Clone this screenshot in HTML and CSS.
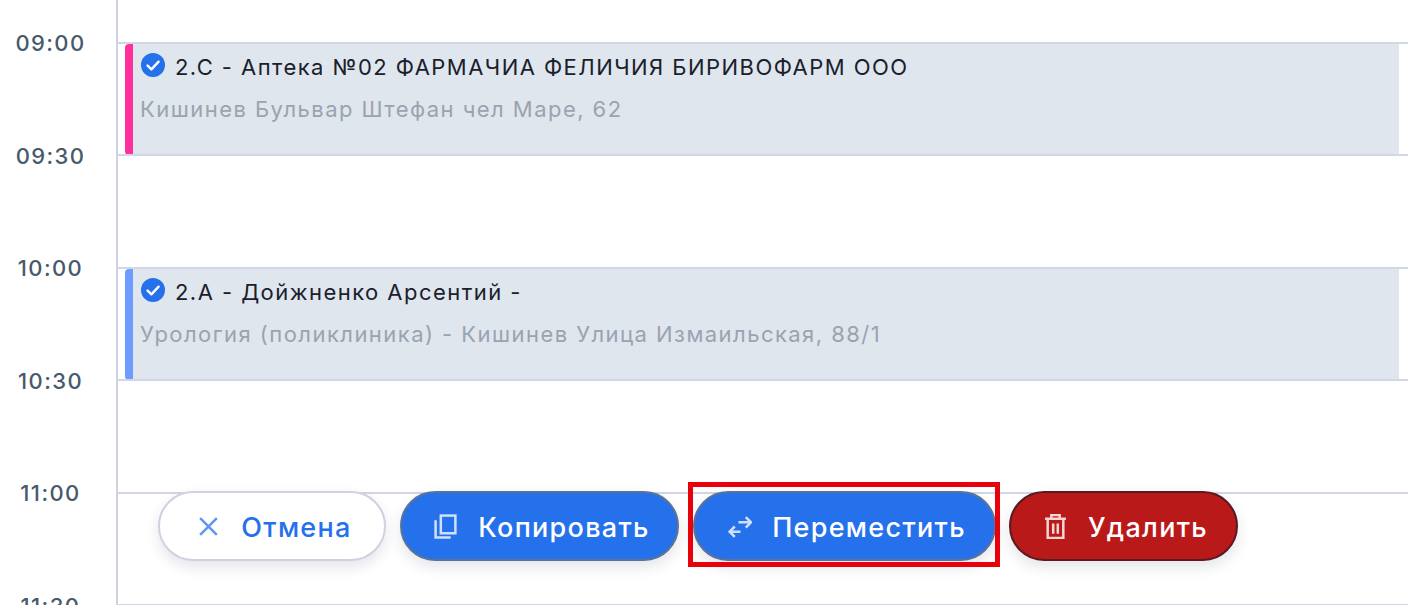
FILE: index.html
```html
<!DOCTYPE html>
<html lang="ru">
<head>
    <meta charset="UTF-8">
    <title>Календарь</title>
    <link rel="stylesheet" href="styles.css">
</head>
<body>
<div class="calendar">
    <ul class="times">
        <li>09:00</li>
        <li>09:30</li>
        <li>10:00</li>
        <li>10:30</li>
        <li>11:00</li>
        <li>11:30</li>
    </ul>
    <div class="grid">
        <div class="slot">
            <div class="event pink">
                <div class="title">
                    <svg class="check" viewBox="0 0 24 24"><circle cx="12" cy="12" r="12" fill="#2570eb"/><path d="M6.6 12.6l3.8 3.7 7.2-7.6" fill="none" stroke="#fff" stroke-width="2.4" stroke-linecap="round" stroke-linejoin="round"/></svg>
                    <span>2.C - Аптека №02 ФАРМАЧИА ФЕЛИЧИЯ БИРИВОФАРМ ООО</span>
                </div>
                <div class="place">Кишинев Бульвар Штефан чел Маре, 62</div>
            </div>
        </div>
        <div class="slot"></div>
        <div class="slot">
            <div class="event blue">
                <div class="title">
                    <svg class="check" viewBox="0 0 24 24"><circle cx="12" cy="12" r="12" fill="#2570eb"/><path d="M6.6 12.6l3.8 3.7 7.2-7.6" fill="none" stroke="#fff" stroke-width="2.4" stroke-linecap="round" stroke-linejoin="round"/></svg>
                    <span>2.A - Дойжненко Арсентий -</span>
                </div>
                <div class="place">Урология (поликлиника) - Кишинев Улица Измаильская, 88/1</div>
            </div>
        </div>
        <div class="slot"></div>
        <div class="slot"></div>
        <div class="slot"></div>
    </div>
</div>
<div class="actions">
    <button class="btn cancel">
        <svg class="icon" viewBox="0 0 24 24"><path d="M4 4l16 16M20 4L4 20" fill="none" stroke="#5f95f2" stroke-width="2.4"/></svg>
        Отмена
    </button>
    <button class="btn primary copy">
        <svg class="icon" viewBox="0 0 24 24"><g fill="none" stroke="#cfe0fb" stroke-width="2.4"><rect x="7.500" y="1.500" width="14" height="17"/><path d="M2.500 6v16.500H17"/></g></svg>
        Копировать
    </button>
    <button class="btn primary move marked">
        <svg class="icon" viewBox="0 0 24 24"><g fill="none" stroke="#cfe0fb" stroke-width="2.4"><path d="M3 17h10M7.500 12L2.500 17l5 5"/><path d="M23 8H11M18 3l5 5-5 5"/></g></svg>
        Переместить
    </button>
    <button class="btn danger">
        <svg class="icon" viewBox="0 0 24 24"><g fill="none" stroke="#f6d5d5" stroke-width="2.4"><path d="M2 4.500h20M8 4.500V1h8v3.500M4.500 4.500v18.500h15V4.500"/><path d="M9.800 9v10M14.200 9v10"/></g></svg>
        Удалить
    </button>
</div>
</body>
</html>
```

FILE: styles.css
```css
html,body{
    margin: 0;
    height: 605px;
    overflow: hidden;
    background: #fff;
    font-family: Inter, "Noto Sans", sans-serif;
}
ul{
    list-style: none;
    margin: 0;
    padding: 0;
}
.calendar{
    display: flex;
    height: 605px;
    overflow: hidden;
}
.times{
    width: 116px;
    flex: none;
    padding-top: 32px;
    box-sizing: border-box;
}
.times li{
    width: 101px;
    height: 112.5px;
    line-height: 22px;
    text-align: center;
    font-size: 22px;
    font-weight: 500;
    letter-spacing: 1.4px;
    color: #475a6b;
}
.grid{
    flex: 1;
    border-left: 2px solid #d0d2e3;
    padding-top: 41.5px;
}
.slot{
    height: 112.500px;
    box-sizing: border-box;
    border-top: 2px solid #d3d6e6;
}
.event{
    height: 111px;
    margin-right: 9px;
    margin-left: 7px;
    padding: 7px 0 0 7px;
    box-sizing: border-box;
    border-left: 8px solid;
    border-radius: 4px 0 0 4px;
    background: #dfe6ee;
}
.pink{
    border-left-color: #ff2f9b;
}
.blue{
    border-left-color: #6c9cff;
}
.title{
    display: flex;
    align-items: center;
    gap: 10px;
    height: 32px;
    font-size: 22px;
    letter-spacing: 1.45px;
    color: #1a202c;
}
.check{
    width: 24px;
    height: 24px;
    flex: none;
    margin-top: -4px;
    margin-left: 1px;
}
.place{
    margin-top: 11px;
    line-height: 30px;
    font-size: 22px;
    letter-spacing: 1.45px;
    color: #9ba3af;
}
.actions{
    position: absolute;
    left: 158px;
    top: 491px;
    display: flex;
    gap: 14px;
}
.btn{
    position: relative;
    display: flex;
    align-items: center;
    justify-content: center;
    gap: 20px;
    height: 70px;
    padding: 2px 0 0 4px;
    box-sizing: border-box;
    border-radius: 35px;
    border: 2px solid;
    font-family: inherit;
    font-size: 27px;
    font-weight: 500;
    letter-spacing: 1.3px;
    box-shadow: 0 6px 14px rgba(30,40,70,0.12);
}
.icon{
    width: 25px;
    height: 25px;
    flex: none;
    margin-top: -2px;
}
.cancel{
    width: 228px;
    background: #fff;
    border-color: #cfd1e3;
    color: #2570eb;
}
.primary{
    background: #2570eb;
    border-color: #5b7396;
    color: #fff;
}
.copy{
    width: 279px;
}
.move{
    width: 303px;
}
.danger{
    width: 229px;
    margin-left: -1px;
    background: #b91919;
    border-color: #5a1a22;
    color: #fff;
}
.marked::after{
    content: "";
    position: absolute;
    left: -7px;
    right: -6px;
    top: -11px;
    bottom: -8px;
    border: 5px solid #e8000b;
}
```
